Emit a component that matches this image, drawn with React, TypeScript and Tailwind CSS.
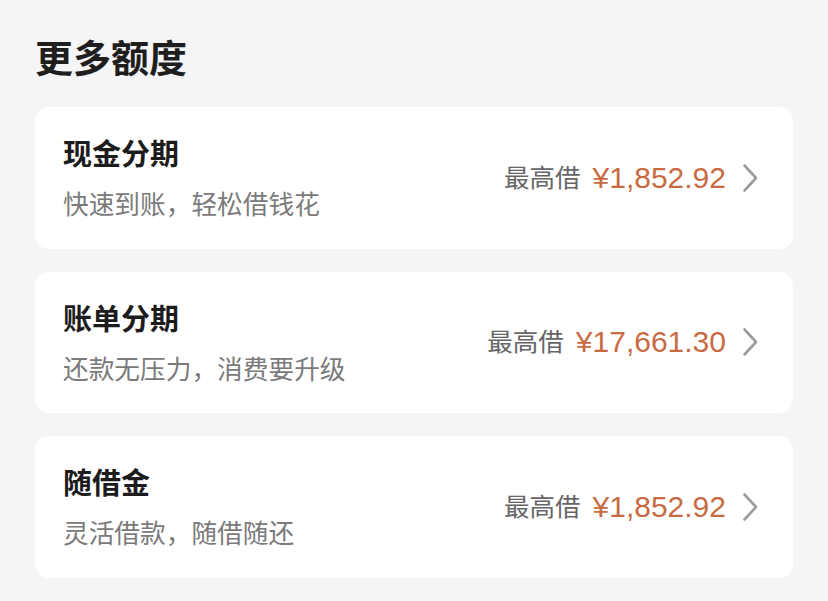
import React from "react";

const items = [
  { title: "现金分期", sub: "快速到账，轻松借钱花", amount: "¥1,852.92" },
  { title: "账单分期", sub: "还款无压力，消费要升级", amount: "¥17,661.30" },
  { title: "随借金", sub: "灵活借款，随借随还", amount: "¥1,852.92" },
];

function Chevron() {
  return (
    <svg width="17" height="30" viewBox="0 0 17 30" fill="none" className="block">
      <path d="M2.5 2.5 L14 15 L2.5 27.5" stroke="#9c9c9c" strokeWidth="2.6" strokeLinecap="round" strokeLinejoin="round" />
    </svg>
  );
}

export default function App() {
  return (
    <div
      className="w-[828px] h-[601px] bg-[#f5f5f5] px-[35px] overflow-hidden"
      style={{ fontFamily: '"Liberation Sans", "Noto Sans CJK SC", sans-serif' }}
    >
      <h1 className="pt-[39px] text-[38px] leading-[40px] font-bold text-[#1e1e1e]">
        更多额度
      </h1>
      <div className="mt-[28px] flex flex-col gap-[23px]">
        {items.map((it) => (
          <div
            key={it.title}
            className="h-[141.5px] bg-white rounded-[14px] pl-[28px] pr-[34px] flex items-center justify-between"
          >
            <div className="flex flex-col">
              <div className="text-[29px] leading-[30px] font-semibold text-[#1c1c1c] mt-[4px]">
                {it.title}
              </div>
              <div className="text-[25.7px] leading-[28px] text-[#7a7a7a] mt-[21px]">{it.sub}</div>
            </div>
            <div className="flex items-center">
              <span className="text-[25.5px] leading-[30px] text-[#666666]">最高借</span>
              <span className="ml-[12px] text-[30px] leading-[30px] text-[#c96b42]">{it.amount}</span>
              <span className="ml-[16px]">
                <Chevron />
              </span>
            </div>
          </div>
        ))}
      </div>
    </div>
  );
}
